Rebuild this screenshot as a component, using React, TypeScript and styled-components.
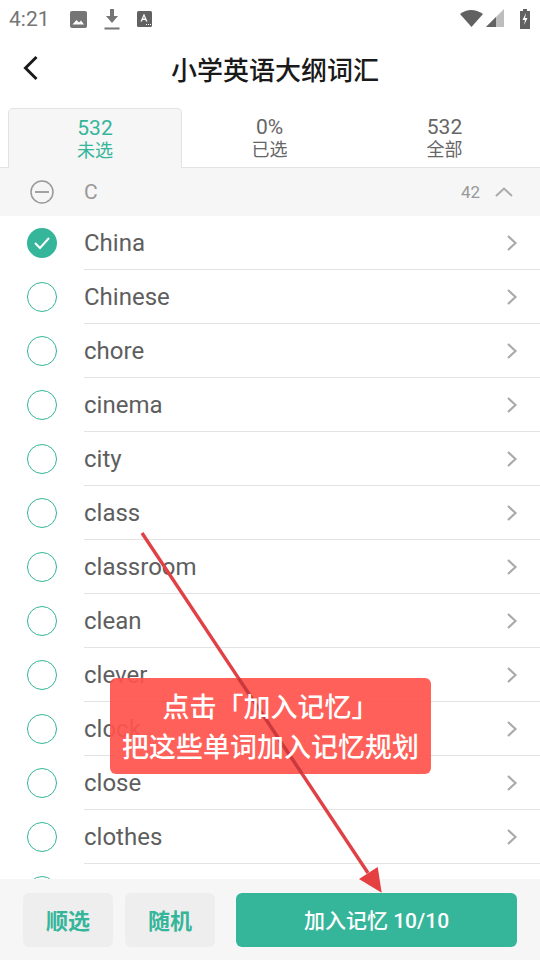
import React from "react";
import styled, { createGlobalStyle } from "styled-components";

const GlobalStyle = createGlobalStyle`
  html, body {
    margin: 0;
    padding: 0;
    background: #fff;
  }
  body {
    font-family: Roboto, "Noto Sans CJK SC", sans-serif;
  }
`;

const Page = styled.div`
  position: relative;
  width: 540px;
  height: 960px;
  display: flex;
  flex-direction: column;
  overflow: hidden;
  background: #fff;
`;

const StatusBar = styled.div`
  height: 38px;
  flex: none;
  display: flex;
  align-items: center;
  padding: 0 10px 0 9px;
  color: #757575;
`;
const Clock = styled.span`
  font-size: 21px;
  margin-right: 21px;
  width: 40px;
`;
const StatusIcons = styled.div`
  display: flex;
  align-items: center;
  gap: 17px;
`;
const StatusRight = styled.div`
  margin-left: auto;
  display: flex;
  align-items: center;
  gap: 2px;
`;

const Header = styled.div`
  height: 60px;
  flex: none;
  display: flex;
  align-items: center;
  justify-content: center;
  padding-left: 10px;
  position: relative;
`;
const BackButton = styled.div`
  position: absolute;
  left: 20px;
  top: 17px;
  width: 22px;
  height: 26px;
`;
const Title = styled.div`
  font-size: 26px;
  color: #1a1a1a;
  font-weight: 500;
`;

const Tabs = styled.div`
  height: 60px;
  margin-top: 10px;
  flex: none;
  display: flex;
  padding-left: 8px;
  box-sizing: border-box;
  border-bottom: 1px solid #e3e3e3;
`;
const Tab = styled.div<{ $active?: boolean }>`
  width: ${(p) => (p.$active ? "174px" : "175px")};
  height: ${(p) => (p.$active ? "60px" : "59px")};
  box-sizing: border-box;
  display: flex;
  flex-direction: column;
  align-items: center;
  padding-top: 7px;
  color: ${(p) => (p.$active ? "#35b59a" : "#666")};
  background: ${(p) => (p.$active ? "#f6f6f6" : "transparent")};
  border: ${(p) => (p.$active ? "1px solid #e3e3e3" : "none")};
  border-bottom: none;
  border-radius: 5px 5px 0 0;
`;
const TabValue = styled.div`
  font-size: 21px;
  line-height: 24px;
`;
const TabLabel = styled.div`
  font-size: 18px;
  line-height: 21px;
`;

const GroupHeader = styled.div`
  height: 48px;
  flex: none;
  display: flex;
  align-items: center;
  background: #f6f6f6;
  color: #999;
`;
const IconCell = styled.div`
  width: 84px;
  flex: none;
  display: flex;
  justify-content: center;
`;
const GroupLetter = styled.span`
  font-size: 21px;
`;
const GroupCount = styled.span`
  margin-left: auto;
  font-size: 17px;
  margin-right: 15px;
`;
const GroupToggle = styled.div`
  width: 18px;
  height: 12px;
  margin-right: 27px;
  display: flex;
`;

const List = styled.div`
  flex: 1;
  min-height: 0;
  overflow: hidden;
`;
const Row = styled.div`
  height: 54px;
  display: flex;
  align-items: center;
`;
const RowBody = styled.div`
  flex: 1;
  height: 54px;
  box-sizing: border-box;
  display: flex;
  align-items: center;
  border-bottom: 1px solid #e3e3e3;
  padding-right: 22px;
`;
const Word = styled.span`
  font-size: 24px;
  color: #5e5e5e;
`;
const Chevron = styled.div`
  margin-left: auto;
  width: 12px;
  height: 18px;
  display: flex;
`;
const RadioOff = styled.div`
  width: 30px;
  height: 30px;
  box-sizing: border-box;
  border: 1.3px solid #35b59a;
  border-radius: 50%;
`;
const RadioOn = styled.div`
  width: 30px;
  height: 30px;
  border-radius: 50%;
  background: #35b59a;
  display: flex;
  align-items: center;
  justify-content: center;
`;

const Footer = styled.div`
  height: 81px;
  flex: none;
  box-sizing: border-box;
  background: #f6f6f6;
  display: flex;
  gap: 12px;
  padding: 14px 23px 13px;
`;
const SideButton = styled.div`
  width: 90px;
  box-sizing: border-box;
  padding-bottom: 2px;
  border-radius: 6px;
  background: #eeeeee;
  color: #35b59a;
  font-size: 22px;
  font-weight: 700;
  display: flex;
  align-items: center;
  justify-content: center;
`;
const MainButton = styled.div`
  flex: 1;
  margin-left: 9px;
  padding-bottom: 2px;
  border-radius: 6px;
  background: #35b59a;
  color: #fff;
  font-size: 21px;
  font-weight: 500;
  display: flex;
  align-items: center;
  justify-content: center;
`;

const ArrowOverlay = styled.svg`
  position: absolute;
  left: 0;
  top: 0;
  pointer-events: none;
`;
const Toast = styled.div`
  position: absolute;
  left: 110px;
  top: 678px;
  width: 321px;
  height: 96px;
  box-sizing: border-box;
  padding-top: 3px;
  border-radius: 6px;
  background: rgba(255, 84, 76, 0.93);
  color: #fff;
  font-size: 27px;
  font-weight: 500;
  line-height: 40px;
  text-align: center;
  display: flex;
  flex-direction: column;
  justify-content: center;
`;
const ToastArrowPart = styled.svg`
  position: absolute;
  left: 0;
  top: 0;
`;
const ToastLine = styled.div`
  position: relative;
`;

const words = [
  "Chinese",
  "chore",
  "cinema",
  "city",
  "class",
  "classroom",
  "clean",
  "clever",
  "clock",
  "close",
  "clothes",
];

const RowChevron = () => (
  <Chevron>
    <svg width="12" height="18" viewBox="0 0 12 18">
      <path d="M2 2l7.5 7L2 16" fill="none" stroke="#aaa" strokeWidth="2.2" />
    </svg>
  </Chevron>
);

const App = () => {
  return (
    <Page>
      <GlobalStyle />
      <StatusBar>
        <Clock>4:21</Clock>
        <StatusIcons>
          <svg width="17" height="18" viewBox="0 0 17 18">
            <rect x="0" y="1" width="17" height="17" rx="2" fill="#757575" />
            <path d="M2.500 14.500l4-4.500 2.500 2.500 2-2 3 4z" fill="#fff" />
          </svg>
          <svg width="16" height="21" viewBox="0 0 16 21">
            <path d="M6 0h4v7h4l-6 7-6-7h4z" fill="#757575" />
            <rect x="0.500" y="18.500" width="15" height="2" fill="#757575" />
          </svg>
          <svg width="15" height="16" viewBox="0 0 15 16">
            <rect width="15" height="16" rx="1.500" fill="#616161" />
            <path d="M3.500 10.500L7 2.500l3.500 8H9l-.6-1.600H5.600L5 10.500zM6.100 7.500h1.800L7 5.200z" fill="#fff" />
            <path d="M9 13h1v1H9zM11 13h1v1h-1zM13 13h1v1h-1z" fill="#fff" />
          </svg>
        </StatusIcons>
        <StatusRight>
          <svg width="24" height="20" viewBox="0 0 24 20">
            <path d="M0 5Q11-3 23 5L11.500 18z" fill="#616161" />
          </svg>
          <svg width="20" height="20" viewBox="0 0 20 20" style={{ marginRight: 12 }}>
            <path d="M0 18L18 0v18z" fill="#bdbdbd" />
            <path d="M0 18l10-10v10z" fill="#616161" />
          </svg>
          <svg width="10" height="20" viewBox="0 0 10 20">
            <path d="M3 0h4v2h3v18H0V2h3z" fill="#616161" />
            <path d="M6 4L2.500 11H5l-1 5 3.500-7H5z" fill="#fff" />
          </svg>
        </StatusRight>
      </StatusBar>

      <Header>
        <BackButton>
          <svg width="22" height="26" viewBox="0 0 22 26">
            <path d="M16.500 2L5.500 13l11 11" fill="none" stroke="#1a1a1a" strokeWidth="3" />
          </svg>
        </BackButton>
        <Title>小学英语大纲词汇</Title>
      </Header>

      <Tabs>
        <Tab $active>
          <TabValue>532</TabValue>
          <TabLabel>未选</TabLabel>
        </Tab>
        <Tab>
          <TabValue>0%</TabValue>
          <TabLabel>已选</TabLabel>
        </Tab>
        <Tab>
          <TabValue>532</TabValue>
          <TabLabel>全部</TabLabel>
        </Tab>
      </Tabs>

      <GroupHeader>
        <IconCell>
          <svg width="24" height="24" viewBox="0 0 24 24">
            <circle cx="12" cy="12" r="11" fill="none" stroke="#999" strokeWidth="1.5" />
            <path d="M5 12h14" stroke="#999" strokeWidth="1.8" />
          </svg>
        </IconCell>
        <GroupLetter>C</GroupLetter>
        <GroupCount>42</GroupCount>
        <GroupToggle>
          <svg width="18" height="12" viewBox="0 0 18 12">
            <path d="M1 10l8-7.500L17 10" fill="none" stroke="#aaa" strokeWidth="2" />
          </svg>
        </GroupToggle>
      </GroupHeader>

      <List>
        <Row>
          <IconCell>
            <RadioOn>
              <svg width="18" height="14" viewBox="0 0 18 14">
                <path d="M2 7l5 5 9-10" fill="none" stroke="#fff" strokeWidth="2" />
              </svg>
            </RadioOn>
          </IconCell>
          <RowBody>
            <Word>China</Word>
            <RowChevron />
          </RowBody>
        </Row>
        {words.map((w) => (
          <Row key={w}>
            <IconCell>
              <RadioOff />
            </IconCell>
            <RowBody>
              <Word>{w}</Word>
              <RowChevron />
            </RowBody>
          </Row>
        ))}
        {/* next row is only peeking out above the footer */}
        <Row>
          <IconCell>
            <RadioOff />
          </IconCell>
        </Row>
      </List>

      <Footer>
        <SideButton>顺选</SideButton>
        <SideButton>随机</SideButton>
        <MainButton>加入记忆 10/10</MainButton>
      </Footer>

      <ArrowOverlay width="540" height="960" viewBox="0 0 540 960">
        <path d="M142 533L368 873" stroke="#e04145" strokeWidth="3.4" fill="none" />
        <path d="M381.700 892.700L359 879 377.700 867z" fill="#e53f42" />
      </ArrowOverlay>
      <Toast>
        {/* the arrow reads darker where it crosses the toast */}
        <ToastArrowPart width="321" height="96" viewBox="0 0 321 96">
          <path d="M128.400 0L192.200 96" stroke="#c9393d" strokeWidth="3.4" fill="none" />
        </ToastArrowPart>
        <ToastLine>点击「加入记忆」</ToastLine>
        <ToastLine>把这些单词加入记忆规划</ToastLine>
      </Toast>
    </Page>
  );
};

export default App;
